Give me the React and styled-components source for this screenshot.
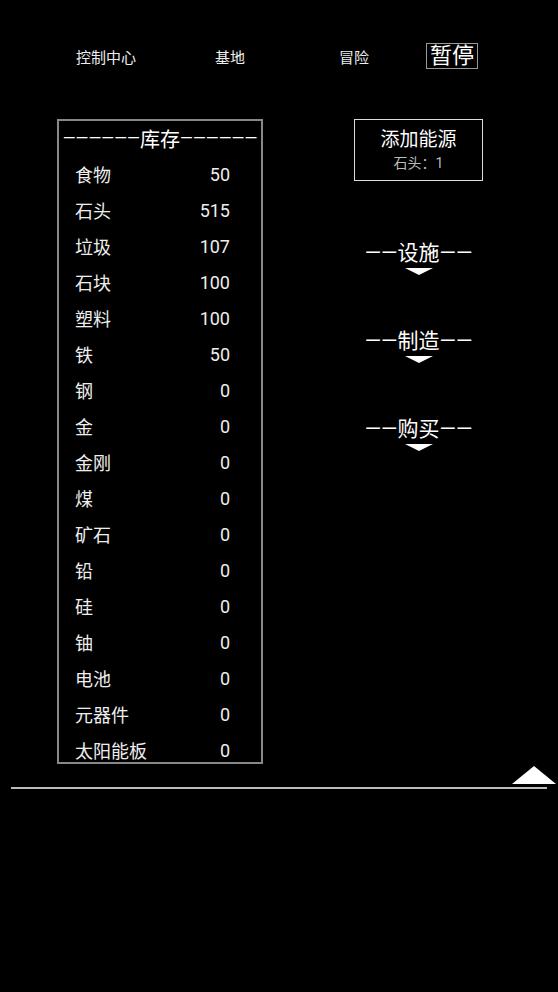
import styled, { createGlobalStyle } from 'styled-components';

const GlobalStyle = createGlobalStyle`
    html, body {
        margin: 0;
        padding: 0;
        background: #000;
        color: #fff;
        font-family: Roboto, "Noto Sans CJK SC", sans-serif;
    }
`;

const Page = styled.div`
    width: 558px;
    min-height: 992px;
    background: #000;
`;

const Nav = styled.nav`
    display: grid;
    grid-template-columns: 124px 124px 124px auto;
    align-items: center;
    padding: 43px 0 0 44px;
    height: 26px;
`;

const NavItem = styled.div`
    text-align: center;
    font-size: 15px;
    color: #eee;
`;

const PauseButton = styled.div`
    justify-self: start;
    margin-left: 10px;
    height: 24px;
    padding: 0 3px;
    border: 1px solid #999;
    font-size: 22px;
    line-height: 24px;
    color: #fff;
`;

const Main = styled.div`
    display: flex;
    align-items: flex-start;
    margin-top: 50px;
    padding-left: 57px;
`;

const Inventory = styled.div`
    width: 202px;
    height: 641px;
    border: 2px solid #888;
    overflow: hidden;
`;

const InventoryTitle = styled.div`
    height: 35px;
    display: flex;
    justify-content: center;
    align-items: center;
    font-size: 20px;
    white-space: nowrap;
    color: #fff;
`;

const Dashes = styled.span`
    font-size: 16.5px;
`;

const Row = styled.div`
    height: 36px;
    display: grid;
    grid-template-columns: 1fr auto;
    align-items: center;
    padding: 0 31px 0 16px;
    font-size: 18px;
    color: #eee;
`;

const Side = styled.div`
    width: 129px;
    margin-left: 91px;
    display: flex;
    flex-direction: column;
    align-items: center;
`;

const EnergyButton = styled.div`
    width: 127px;
    height: 60px;
    border: 1px solid #ddd;
    display: flex;
    flex-direction: column;
    align-items: center;
    justify-content: center;
    gap: 3px;
`;

const EnergyTitle = styled.div`
    font-size: 19px;
    line-height: 22px;
    color: #fff;
`;

const EnergyCost = styled.div`
    font-size: 14px;
    line-height: 18px;
    color: #bbb;
`;

const Section = styled.div`
    display: flex;
    flex-direction: column;
    align-items: center;
    margin-top: ${p => p.$first ? '60px' : '54px'};
`;

const SectionTitle = styled.div`
    font-size: 21px;
    line-height: 24px;
    color: #fff;
    white-space: nowrap;
`;

const DownArrow = styled.div`
    margin-top: 3px;
    width: 0;
    height: 0;
    border-left: 14px solid transparent;
    border-right: 14px solid transparent;
    border-top: 7px solid #fff;
`;

const Footer = styled.div`
    margin-top: 2px;
    display: flex;
    flex-direction: column;
    align-items: flex-end;
`;

const UpArrow = styled.div`
    margin-right: 2px;
    width: 0;
    height: 0;
    border-left: 22px solid transparent;
    border-right: 22px solid transparent;
    border-bottom: 18px solid #fff;
`;

const Line = styled.div`
    align-self: stretch;
    margin: 3px 11px 0;
    height: 2px;
    background: #bbb;
`;

const stock = [
    ['食物', 50],
    ['石头', 515],
    ['垃圾', 107],
    ['石块', 100],
    ['塑料', 100],
    ['铁', 50],
    ['钢', 0],
    ['金', 0],
    ['金刚', 0],
    ['煤', 0],
    ['矿石', 0],
    ['铅', 0],
    ['硅', 0],
    ['铀', 0],
    ['电池', 0],
    ['元器件', 0],
    ['太阳能板', 0],
];

function App() {
    return (
        <>
            <GlobalStyle />
            <Page>
                <Nav>
                    <NavItem>控制中心</NavItem>
                    <NavItem>基地</NavItem>
                    <NavItem>冒险</NavItem>
                    <PauseButton>暂停</PauseButton>
                </Nav>
                <Main>
                    <Inventory>
                        <InventoryTitle>
                            <Dashes>——————</Dashes>库存<Dashes>——————</Dashes>
                        </InventoryTitle>
                        {stock.map(([name, count]) => (
                            <Row key={name}>
                                <span>{name}</span>
                                <span>{count}</span>
                            </Row>
                        ))}
                    </Inventory>
                    <Side>
                        <EnergyButton>
                            <EnergyTitle>添加能源</EnergyTitle>
                            <EnergyCost>石头：1</EnergyCost>
                        </EnergyButton>
                        <Section $first>
                            <SectionTitle>——设施——</SectionTitle>
                            <DownArrow />
                        </Section>
                        <Section>
                            <SectionTitle>——制造——</SectionTitle>
                            <DownArrow />
                        </Section>
                        <Section>
                            <SectionTitle>——购买——</SectionTitle>
                            <DownArrow />
                        </Section>
                    </Side>
                </Main>
                <Footer>
                    <UpArrow />
                    <Line />
                </Footer>
            </Page>
        </>
    );
}

export default App;
